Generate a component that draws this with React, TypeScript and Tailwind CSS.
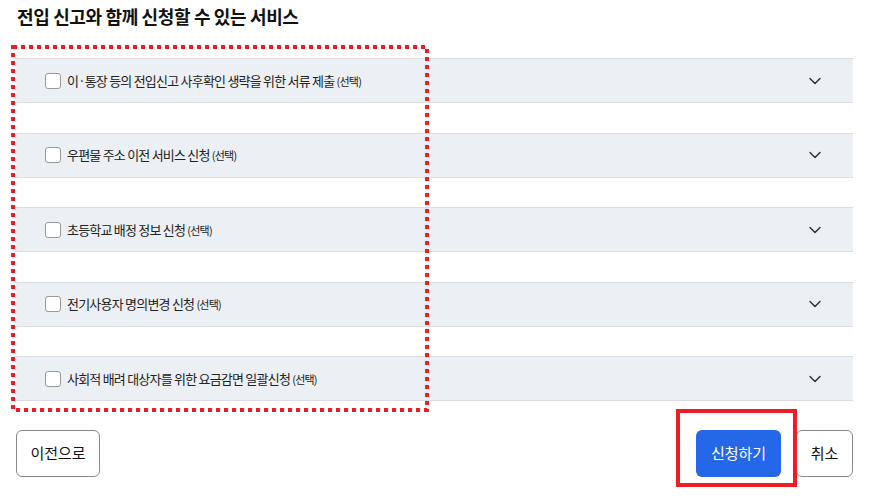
import React from "react";

const items = [
  "이·통장 등의 전입신고 사후확인 생략을 위한 서류 제출",
  "우편물 주소 이전 서비스 신청",
  "초등학교 배정 정보 신청",
  "전기사용자 명의변경 신청",
  "사회적 배려 대상자를 위한 요금감면 일괄신청",
];

function Chevron() {
  return (
    <svg width="14" height="14" viewBox="0 0 14 14" fill="none">
      <path d="M2 4.5 L7 9.5 L12 4.5" stroke="#333" strokeWidth="1.5" strokeLinecap="round" strokeLinejoin="round" />
    </svg>
  );
}

export default function App() {
  return (
    <div
      className="relative w-[872px] h-[496px] bg-white overflow-hidden text-[#1e1e1e]"
      style={{ fontFamily: '"Noto Sans CJK KR", "Noto Sans", sans-serif' }}
    >
      <div className="pl-[15px] pr-[19px]">
        <h1 className="pl-[2px] pt-[3px] text-[18px] leading-[26px] font-bold tracking-[-0.02em] text-[#111]">
          전입 신고와 함께 신청할 수 있는 서비스
        </h1>
        <div className="mt-[29px] flex flex-col gap-[29.5px]">
          {items.map((t) => (
            <div
              key={t}
              className="h-[45px] flex items-center border-y border-[#dadee4] bg-[#eceff3] pl-[30px] pr-[31px]"
            >
              <span className="w-[16px] h-[16px] rounded-[3px] border border-[#9a9a9a] bg-white shrink-0" />
              <span className="ml-[6px] text-[13px] tracking-[-0.06em] text-[#222]">
                {t} <span className="text-[11px]">(선택)</span>
              </span>
              <span className="ml-auto">
                <Chevron />
              </span>
            </div>
          ))}
        </div>
        <div className="mt-[29px] flex items-center">
          <button className="ml-[1px] w-[84px] h-[47px] rounded-[6px] border border-[#8a8a8a] bg-white text-[15px] text-[#111]">
            이전으로
          </button>
          <button className="ml-auto w-[85px] h-[47px] rounded-[6px] bg-[#2468e8] text-[15px] text-white">
            신청하기
          </button>
          <button className="ml-[15px] w-[57px] h-[47px] rounded-[6px] border border-[#8a8a8a] bg-white text-[15px] text-[#111]">
            취소
          </button>
        </div>
      </div>

      <svg className="absolute left-[11px] top-[45px] pointer-events-none" width="418" height="367" viewBox="0 0 418 367">
        <rect x="2" y="2" width="414" height="363" fill="none" stroke="#ee1d25" strokeWidth="4" strokeDasharray="4 4" />
      </svg>
      <div className="absolute left-[676px] top-[409px] w-[121px] h-[78px] border-4 border-[#ee1d25] pointer-events-none" />
    </div>
  );
}
